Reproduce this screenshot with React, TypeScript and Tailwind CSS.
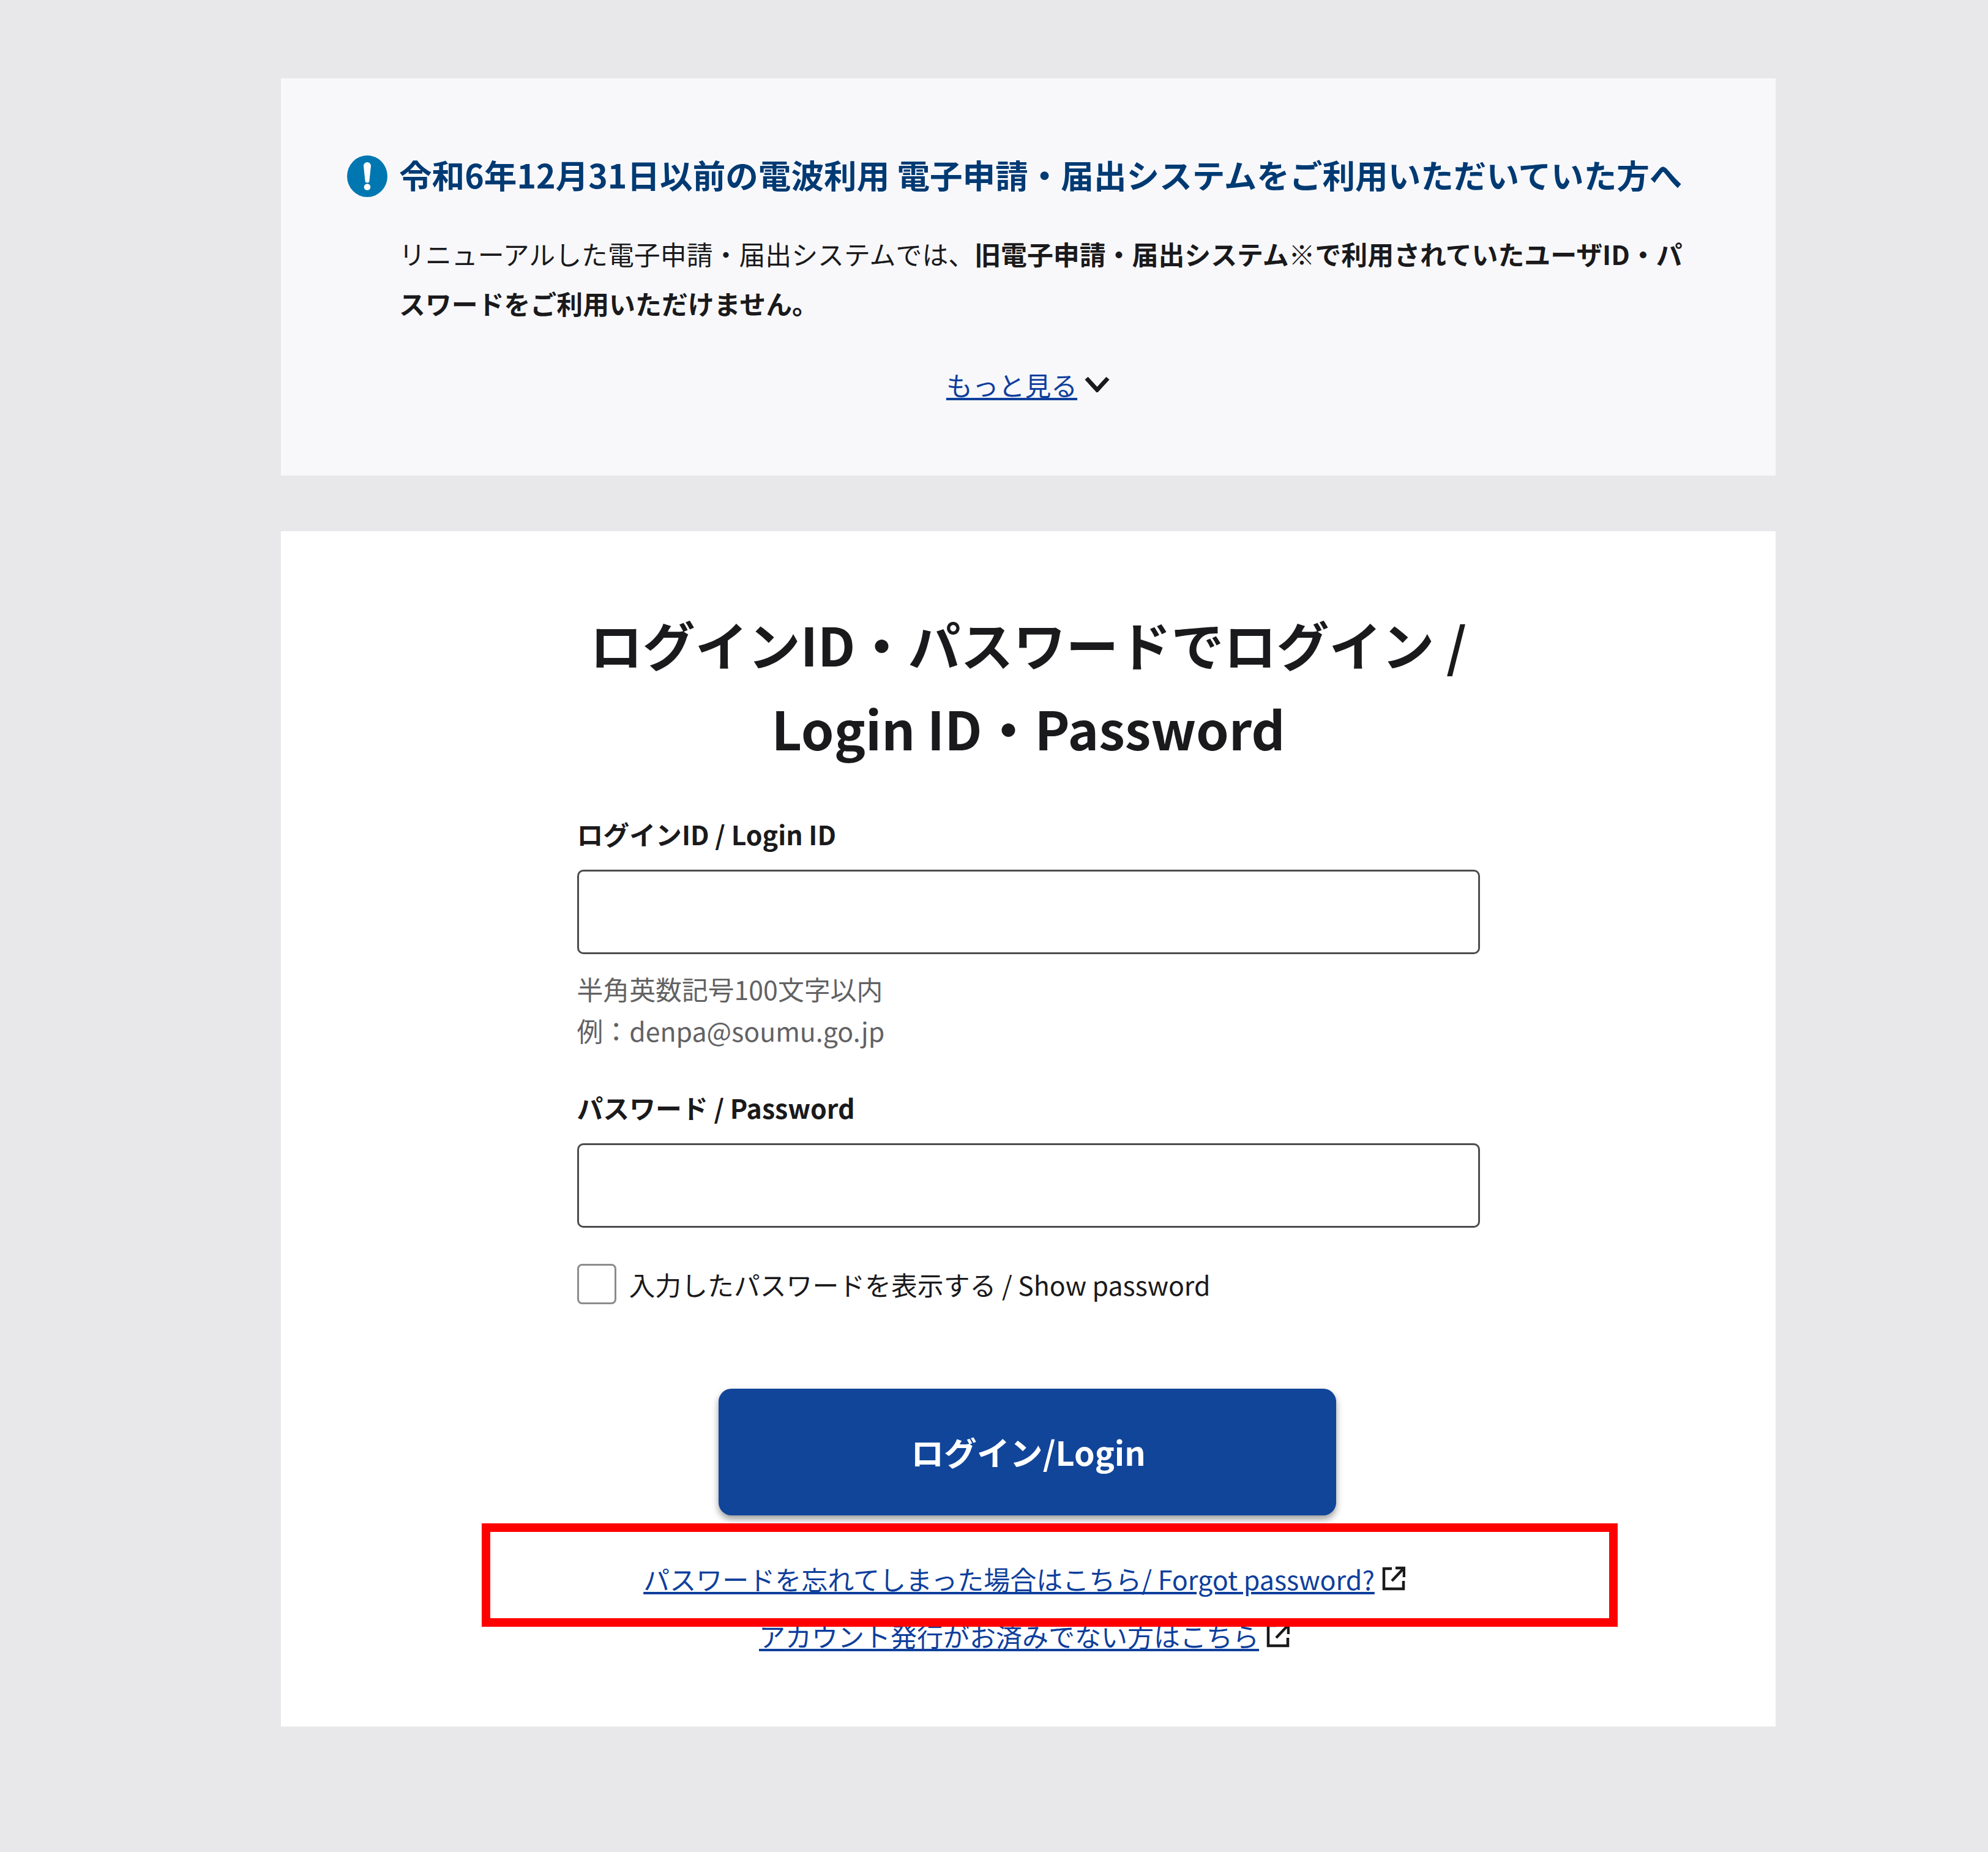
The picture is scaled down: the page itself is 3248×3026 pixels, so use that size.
const font = 'font-["Noto_Sans_CJK_JP","Noto_Sans",sans-serif]'

function ExternalIcon({ className }: { className?: string }) {
  return (
    <svg viewBox="0 0 38 40" fill="none" stroke="#1a1a1a" strokeWidth="4.5" className={className}>
      <path d="M16 4H3v33h32V24" />
      <path d="M16 24 34 5" />
      <path d="M22 3h14v15" />
    </svg>
  )
}

function Field({ label, children }: { label: string; children?: React.ReactNode }) {
  return (
    <div>
      <label className="block text-[42.85px] leading-[68px] font-bold text-[#1a1a1c]">{label}</label>
      <input
        type="text"
        className="mt-[25px] block h-[138px] w-full rounded-[10px] border-[3px] border-[#4c4c4f] bg-white"
      />
      {children}
    </div>
  )
}

export default function App() {
  return (
    <div className={`${font} min-h-[3026px] bg-[#e8e8ea] pt-[128px] pl-[459px]`}>
      <div className="w-[2442px]">
        <section className="h-[649px] bg-[#f8f8fb] pt-[118px] pl-[108px]">
          <div className="flex items-center gap-[19px]">
            <svg viewBox="0 0 66 68" className="h-[68px] w-[66px] shrink-0">
              <ellipse cx="33" cy="34" rx="33" ry="34" fill="#0077b0" />
              <path d="M27 17a6 6 0 0 1 12 0l-2.5 24a3.5 3.5 0 0 1-7 0z" fill="#fff" />
              <circle cx="33" cy="51.5" r="5.3" fill="#fff" />
            </svg>
            <h2 className="-translate-y-[3px] text-[53.6px] leading-[84px] font-bold whitespace-nowrap text-[#003a73]">
              令和6年12月31日以前の電波利用 電子申請・届出システムをご利用いただいていた方へ
            </h2>
          </div>
          <p className="mt-[44px] ml-[85px] w-[2110px] text-[42.9px] leading-[81px] text-[#1a1a1c]">
            リニューアルした電子申請・届出システムでは、
            <strong className="font-bold">旧電子申請・届出システム</strong>※
            <strong className="font-bold">で利用されていたユーザID・パスワードをご利用いただけません。</strong>
          </p>
          <div className="mt-[58px] flex items-center justify-center gap-[12px] pr-[109px]">
            <a href="#" className="text-[42.85px] leading-[68px] text-[#0f3f9c] underline">
              もっと見る
            </a>
            <svg viewBox="0 0 41 26" fill="none" stroke="#1a1a1c" strokeWidth="7" className="h-[26px] w-[41px]">
              <path d="M3 3l17.5 19L38 3" />
            </svg>
          </div>
        </section>

        <section className="relative mt-[91px] flex h-[1953px] flex-col items-center bg-white pt-[115px]">
          <h1 className="text-center text-[86px] leading-[137px] font-bold text-[#1a1a1c]">
            ログインID・パスワードでログイン /
            <br />
            Login ID・Password
          </h1>
          <div className="mt-[71px] w-[1475px]">
            <Field label="ログインID / Login ID">
              <p className="mt-[22px] text-[42.85px] leading-[68px] text-[#626264]">
                半角英数記号100文字以内
                <br />
                例：denpa@soumu.go.jp
              </p>
            </Field>
            <div className="mt-[58px]">
              <Field label="パスワード / Password" />
            </div>
            <label className="mt-[58px] flex items-center gap-[21px] text-[42.85px] leading-[68px] text-[#1a1a1c]">
              <input
                type="checkbox"
                className="h-[66px] w-[64px] appearance-none rounded-[8px] border-[3px] border-[#8c8c8e] bg-white"
              />
              入力したパスワードを表示する / Show password
            </label>
          </div>
          <button
            type="button"
            className="mt-[137px] mr-[3px] h-[207px] w-[1009px] rounded-[21px] bg-[#11459a] pl-[3px] text-[53.9px] font-bold text-white shadow-[0_6px_12px_rgba(0,0,0,0.4)]"
          >
            ログイン/Login
          </button>
          <div className="mt-[69px] mr-[13px] flex items-center gap-[12px]">
            <a href="#" className="text-[43px] leading-[68px] text-[#0f3f9c] underline">
              パスワードを忘れてしまった場合はこちら/ Forgot password?
            </a>
            <ExternalIcon className="h-[40px] w-[38px]" />
          </div>
          <div className="mt-[25px] mr-[13px] flex items-center gap-[12px]">
            <a href="#" className="text-[43px] leading-[68px] text-[#0f3f9c] underline">
              アカウント発行がお済みでない方はこちら
            </a>
            <ExternalIcon className="h-[40px] w-[38px]" />
          </div>
          <div className="pointer-events-none absolute top-[1621px] left-[328px] h-[169px] w-[1856px] border-[14px] border-[#ff0000]" />
        </section>
      </div>
    </div>
  )
}
